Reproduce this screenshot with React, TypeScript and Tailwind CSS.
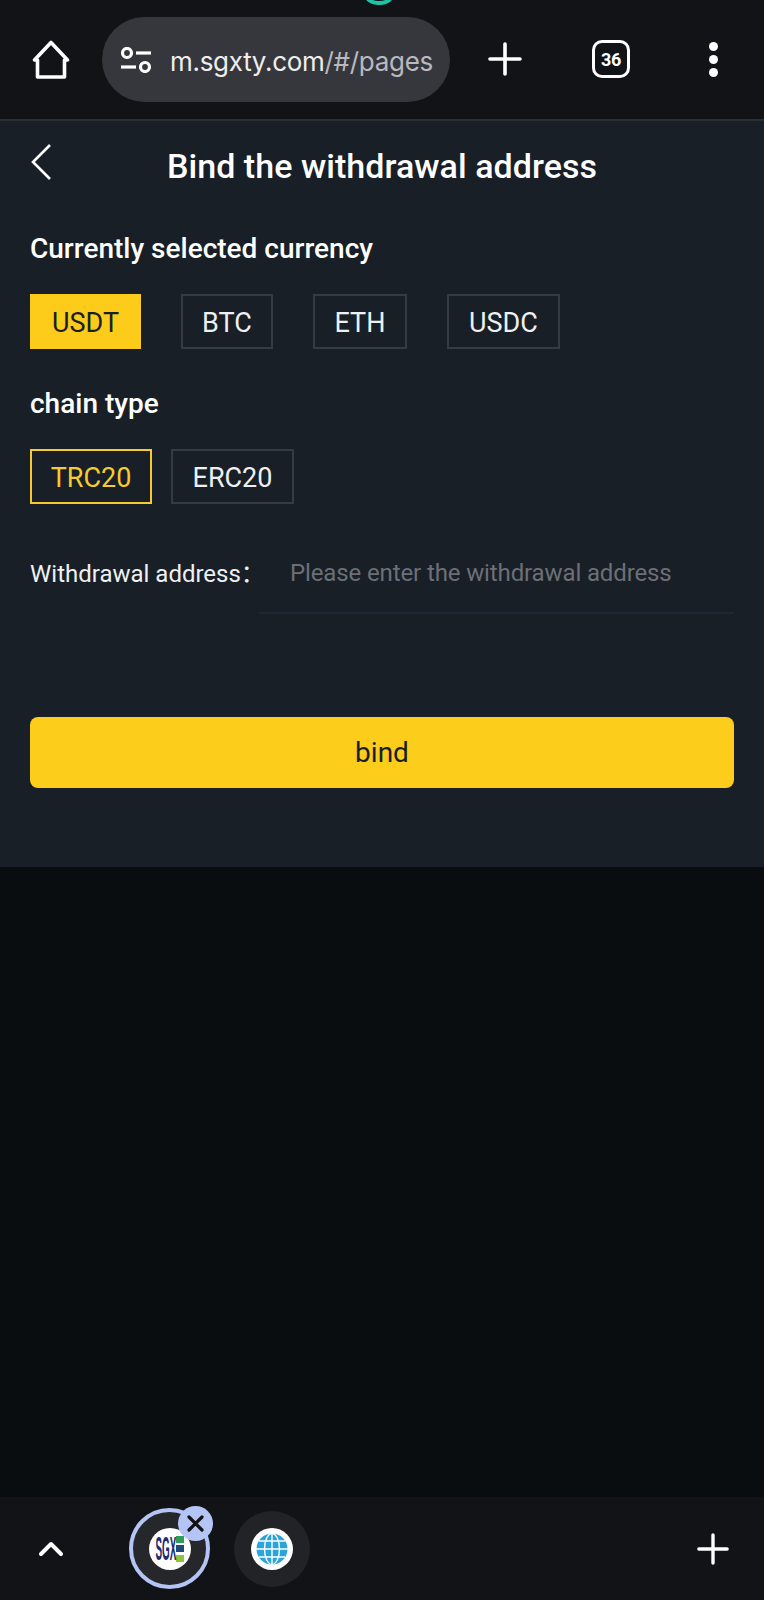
const fontStack = "font-['Roboto','Noto_Sans_CJK_SC',sans-serif]";

const currencies = [
  { label: 'USDT', width: 'w-[111px]', active: true },
  { label: 'BTC', width: 'w-[92px]', active: false },
  { label: 'ETH', width: 'w-[94px]', active: false },
  { label: 'USDC', width: 'w-[113px]', active: false },
];

const chains = [
  { label: 'TRC20', active: true },
  { label: 'ERC20', active: false },
];

const HomeIcon = () => (
  <svg width="38" height="40" viewBox="0 0 38 40" fill="none" stroke="white" strokeWidth="3.6" strokeLinejoin="round">
    <path d="M19 2.5 L35.5 20 H32.5 V37 H5.5 V20 H2.5 Z" />
  </svg>
);

const TuneIcon = () => (
  <svg width="32" height="26" viewBox="0 0 32 26" fill="none" stroke="white" strokeWidth="3.2">
    <circle cx="7" cy="6" r="4.5" />
    <path d="M16 6 H31" />
    <path d="M1 20 H16" />
    <circle cx="25" cy="20" r="4.5" />
  </svg>
);

const PlusIcon = ({ size }: { size: number }) => (
  <svg width={size} height={size} viewBox="0 0 34 34" stroke="white" strokeWidth="3.6" strokeLinecap="round">
    <path d="M17 2 V32 M2 17 H32" />
  </svg>
);

const SgxFavicon = () => (
  <div className="flex h-[42px] w-[42px] items-center justify-center rounded-full bg-white">
    <div className="flex w-[21px] justify-center">
      <span className="scale-x-[0.3] font-['Liberation_Sans',sans-serif] text-[33px] leading-none font-bold text-[#1c2a6e]">
        SGX
      </span>
    </div>
    <div className="flex h-[26px] w-[8px] flex-col justify-between">
      <div className="h-[7px] bg-[#2f9e5b]" />
      <div className="h-[7px] bg-[#1c4a7e]" />
      <div className="h-[7px] bg-[#8cc63f]" />
    </div>
  </div>
);

const GlobeIcon = () => (
  <svg width="32" height="32" viewBox="0 0 32 32" fill="#2ba4dc" stroke="white" strokeWidth="1.4">
    <circle cx="16" cy="16" r="15.5" stroke="none" />
    <ellipse cx="16" cy="16" rx="7.5" ry="15.5" fill="none" />
    <path d="M16 0 V32 M0 16 H32 M3 8 H29 M3 24 H29" fill="none" />
  </svg>
);

export default function App() {
  return (
    <div className={`flex h-[1600px] w-[764px] flex-col bg-[#0a0d10] ${fontStack}`}>
      {/* Browser toolbar */}
      <div className="relative flex h-[121px] shrink-0 items-start border-b-2 border-[#2d2f33] bg-[#121317] pt-[17px]">
        <svg className="absolute top-0 left-[365px]" width="28" height="5" viewBox="0 0 28 5" fill="none">
          <path d="M1 -4 C5 5 21 5 26 -2" stroke="#1fc4a4" strokeWidth="4" />
        </svg>
        <div className="mt-[23px] ml-[32px]">
          <HomeIcon />
        </div>
        <div className="ml-[32px] flex h-[85px] w-[348px] items-center rounded-full bg-[#36373c] pl-[18px]">
          <TuneIcon />
          <span className="mt-[3px] ml-[18px] font-['Inter',sans-serif] text-[26px] tracking-[-0.3px] whitespace-nowrap text-[#eeeef0]">
            m.sgxty.com<span className="text-[#b9b9c0]">/#/pages</span>
          </span>
        </div>
        <div className="mt-[25px] ml-[38px]">
          <PlusIcon size={34} />
        </div>
        <div className="mt-[23px] ml-[70px] flex h-[38px] w-[38px] items-center justify-center rounded-[10px] border-[3px] border-white">
          <span className="font-['Roboto',sans-serif] text-[18px] font-bold tracking-[-0.3px] text-white">36</span>
        </div>
        <div className="mt-[25px] ml-[79px] flex h-[35px] flex-col justify-between">
          <div className="h-[9px] w-[9px] rounded-full bg-white" />
          <div className="h-[9px] w-[9px] rounded-full bg-white" />
          <div className="h-[9px] w-[9px] rounded-full bg-white" />
        </div>
      </div>

      {/* Bind address panel */}
      <div className="flex shrink-0 flex-col bg-[#181f27] px-[30px] pb-[79px] text-white">
        <div className="flex h-[93px] items-center">
          <svg width="22" height="38" viewBox="0 0 22 38" fill="none" stroke="white" strokeWidth="2.6" className="-mt-[12px]">
            <path d="M20 2 L3 19 L20 36" />
          </svg>
          <h1 className="flex-1 pr-[22px] pb-[2px] text-center text-[34px] font-medium tracking-[0.05px] text-white">Bind the withdrawal address</h1>
        </div>

        <div className="mt-[19px] text-[28px] leading-[32px] font-medium">Currently selected currency</div>
        <div className="mt-[29px] flex gap-[40px]">
          {currencies.map((c) =>
            c.active ? (
              <div key={c.label} className={`flex h-[55px] items-center justify-center bg-[#fdcb1a] pt-[3px] text-[27px] text-[#181f27] ${c.width}`}>
                {c.label}
              </div>
            ) : (
              <div key={c.label} className={`flex h-[55px] items-center justify-center border-2 border-[#333b47] pt-[3px] text-[27px] text-[#eef0f2] ${c.width}`}>
                {c.label}
              </div>
            ),
          )}
        </div>

        <div className="mt-[39px] text-[28px] leading-[32px] font-medium">chain type</div>
        <div className="mt-[29px] flex gap-[19px]">
          {chains.map((c) =>
            c.active ? (
              <div key={c.label} className="flex h-[55px] w-[122px] items-center justify-center border-2 border-[#f6cb2f] pt-[3px] text-[27px] text-[#f6cb2f]">
                {c.label}
              </div>
            ) : (
              <div key={c.label} className="flex h-[55px] w-[123px] items-center justify-center border-2 border-[#333b47] pt-[3px] text-[27px] text-[#eef0f2]">
                {c.label}
              </div>
            ),
          )}
        </div>

        <div className="mt-[29px] flex h-[81px]">
          <div className="flex w-[229px] shrink-0 items-center text-[24px] whitespace-nowrap text-[#eef0f2]">Withdrawal address：</div>
          <div className="flex flex-1 items-center border-b-2 border-[#1e2735] pl-[31px] text-[24px] tracking-[-0.12px] text-[#6c7076]">
            Please enter the withdrawal address
          </div>
        </div>

        <button className="mt-[103px] flex h-[71px] items-center justify-center rounded-[8px] bg-[#fdcd1b] text-[28px] text-[#181f27]">
          bind
        </button>
      </div>

      <div className="flex-1" />

      {/* Tab strip */}
      <div className="flex h-[103px] shrink-0 items-center bg-[#121317] pl-[38px]">
        <svg width="26" height="16" viewBox="0 0 26 16" fill="none" stroke="white" strokeWidth="4" strokeLinecap="round" strokeLinejoin="round">
          <path d="M3 13 L13 3 L23 13" />
        </svg>
        <div className="relative ml-[65px] flex h-[81px] w-[81px] items-center justify-center rounded-full border-4 border-[#b3c4f5] bg-[#26272b]">
          <SgxFavicon />
          <div className="absolute -top-[6px] -right-[7px] flex h-[35px] w-[35px] items-center justify-center rounded-full bg-[#b3c4f5]">
            <svg width="17" height="17" viewBox="0 0 17 17" stroke="#121317" strokeWidth="3.2" strokeLinecap="round">
              <path d="M2 2 L15 15 M15 2 L2 15" />
            </svg>
          </div>
        </div>
        <div className="ml-[24px] flex h-[76px] w-[76px] items-center justify-center rounded-full bg-[#222327]">
          <div className="flex h-[42px] w-[42px] items-center justify-center rounded-full bg-white">
            <GlobeIcon />
          </div>
        </div>
        <div className="mr-[35px] ml-auto">
          <PlusIcon size={32} />
        </div>
      </div>
    </div>
  );
}
